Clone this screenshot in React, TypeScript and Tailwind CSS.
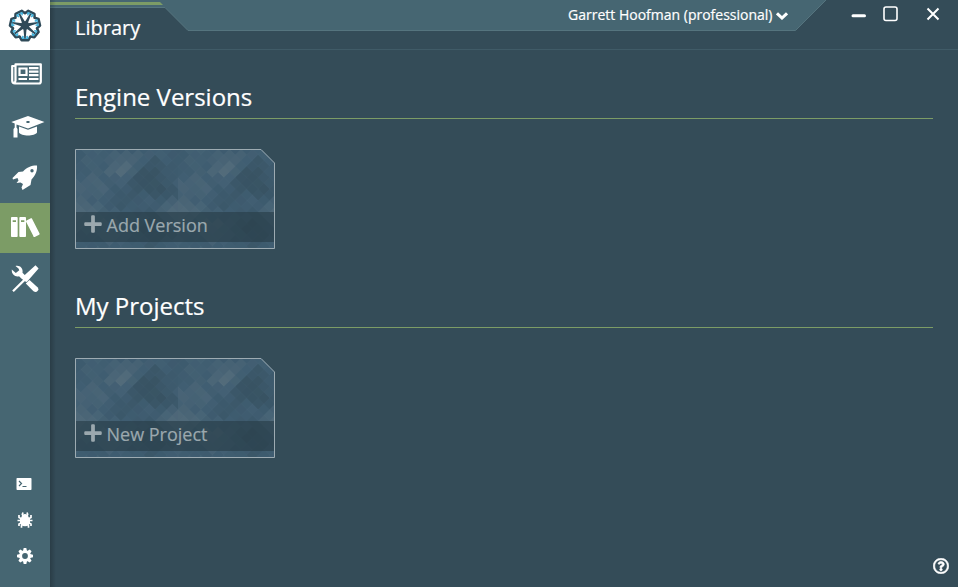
import type { ReactNode } from "react";
import { ImBooks } from "react-icons/im";
import { FaPlus, FaRegQuestionCircle } from "react-icons/fa";

const CELL = 103 / 18;

// Soft light and dark areas of the repeating card texture: x, y, radius, strength.
const AREAS = [
  [42, 19, 8, 0.13], [60, 13, 8, 0.13], [52, 24, 8, 0.11],
  [78, 22, 10, -0.19], [84, 40, 9, -0.18], [66, 31, 10, -0.16], [101, 44, 7, -0.14],
  [103, 62, 13, 0.19], [0, 62, 13, 0.19], [20, 34, 14, 0.08],
  [48, 50, 11, -0.1], [43, 76, 15, 0.08], [76, 81, 14, -0.14],
];

function noise(a: number, b: number) {
  const v = Math.sin(a * 127.1 + b * 311.7) * 43758.5453;
  return v - Math.floor(v);
}

const DIAMONDS: { x: number; y: number; shade: number }[] = [];
for (let row = 0; row <= 18; row++) {
  for (let col = 0; col <= 18; col++) {
    if ((row + col) % 2) continue;
    const x = col * CELL;
    const y = row * CELL;
    let shade = (noise(col % 18, row) - 0.5) * 0.1;
    for (const [ax, ay, r, s] of AREAS) {
      shade += s * Math.exp(-((Math.abs(x - ax) + Math.abs(y - ay)) ** 2) / (2 * r * r));
    }
    DIAMONDS.push({ x, y, shade });
  }
}

function Texture({ id }: { id: string }) {
  return (
    <svg width="200" height="100" className="absolute inset-0">
      <defs>
        <pattern id={id} width="103" height="103" patternUnits="userSpaceOnUse">
          <rect width="103" height="103" fill="#3f5d71" />
          {DIAMONDS.map((d, i) => (
            <path
              key={i}
              d={`M${d.x} ${d.y - CELL}l${CELL} ${CELL}l${-CELL} ${CELL}l${-CELL} ${-CELL}z`}
              fill={d.shade > 0 ? "#77868d" : "#2b4048"}
              opacity={Math.min(Math.abs(d.shade) * 1.9, 0.35)}
            />
          ))}
        </pattern>
      </defs>
      <path d="M0 0H186L200 14V100H0Z" fill={`url(#${id})`} />
      <path d="M0 63H200V93H0Z" fill="#283d48" opacity=".65" />
      <path d="M.5 .5H186L199.500 14V99.500H.5Z" fill="none" stroke="#9dabb2" />
    </svg>
  );
}

function Card({ id, label }: { id: string; label: string }) {
  return (
    <button className="relative mt-[30px] block h-[100px] w-[200px] text-left">
      <Texture id={id} />
      <span className="relative mt-[53px] flex h-[30px] items-center pl-2 text-[18px] text-[#9ba8ae]">
        <FaPlus className="-mt-[3px] mr-[3.500px] size-5" />
        {label}
      </span>
    </button>
  );
}

function Section({ id, title, label }: { id: string; title: string; label: string }) {
  return (
    <section className="h-[209px]">
      <h2 className="h-[47px] border-b border-[#7c9c66] pt-[7px] text-2xl leading-[36px] text-white">{title}</h2>
      <Card id={id} label={label} />
    </section>
  );
}

const LOBES = [0, 1, 2, 3, 4, 5, 6].map((k) => 90 + (k * 360) / 7);

function polar(deg: number, r: number) {
  const a = (deg * Math.PI) / 180;
  return `${(Math.cos(a) * r).toFixed(2)} ${(Math.sin(a) * r).toFixed(2)}`;
}

function gearOutline(outer: number, inner: number) {
  const points = LOBES.flatMap((a) => [polar(a - 13, outer), polar(a + 13, outer), polar(a + 180 / 7, inner)]);
  return `M${points.join("L")}Z`;
}

function Logo() {
  return (
    <svg viewBox="-25 -25.500 50 50" className="size-[50px]" strokeLinejoin="round">
      <path d={gearOutline(15, 12.3)} fill="#fff" stroke="#2f4a58" strokeWidth="2.600" />
      {LOBES.map((a) => (
        <g key={a} transform={`rotate(${a - 90})`}>
          <path d="M-3.300 12.800H3.300M-3.300 12.800L-1.600 10.500M3.300 12.800L1.600 10.500" stroke="#45b4de" strokeWidth="1.500" fill="none" />
          <path d="M-1.600 3L-.7 13H.7L1.600 3Z" fill="#2f4a58" />
        </g>
      ))}
      <circle r="4.300" fill="#2f4a58" />
    </svg>
  );
}

function NavItem({ active, children }: { active?: boolean; children: ReactNode }) {
  return (
    <a className={`flex h-[50px] w-[50px] items-center justify-center ${active ? "bg-[#7c9c66]" : ""}`}>{children}</a>
  );
}

function Newspaper() {
  return (
    <svg viewBox="0 0 31 22" className="mr-[-3px] mb-[2px] h-[22px] w-[31px]" fill="none" stroke="currentColor">
      <path d="M4.500 3H1.200V17.500Q1.200 20.500 4 20.500H28Q29.800 20.500 29.800 18.500V1.300H4.500V17.500Q4.500 19.500 3 19.800" strokeWidth="2.200" strokeLinejoin="round" />
      <path d="M8.500 5.500H15.500V12H8.500ZM18 5.200H27.500M18 8.700H27.500M18 12.200H27.500M7.500 16H16M18 16H27.500" strokeWidth="2.200" />
    </svg>
  );
}

function Cap() {
  return (
    <svg viewBox="0 0 34 22" className="mt-[2px] mr-[-6px] h-[22px] w-[34px] shrink-0" fill="currentColor">
      <path fillRule="evenodd" d="M17 0L33.500 6L17 12.500L5.500 8.500V11.500L6.500 13V21.500H2.500V13L3.700 11.500V7.500L.3 6ZM17 5C14.500 5 14.500 7 17 7S19.500 5 17 5Z" />
      <path d="M8 10.500L17 13.800L26 10.500V16.500C24 20.500 10 20.500 8 16.500Z" />
    </svg>
  );
}

function Rocket() {
  return (
    <svg viewBox="0 0 26 26" className="mt-[2px] mr-[1px] size-[26px]" fill="currentColor">
      <path fillRule="evenodd" d="M25 .5C25.400 5 24 10 19.500 14.500L18.500 20L10.500 25L9.500 22.500L11 19L8.500 17.500L4.500 18L6.500 15.500L5.500 13L1 14.500L.5 13L6.500 7L11 6.500C15 2 20 .3 25 .5ZM20 4A1.700 1.700 0 1 0 20 7.400A1.700 1.700 0 1 0 20 4Z" />
    </svg>
  );
}

function Tools() {
  return (
    <svg viewBox="0 0 28 28" className="size-[28px]" fill="currentColor">
      <path d="M4.500 1C8.500 0 12.500 3 11.500 7.800L15 11.200L11.500 14.500L8 11.200C4.500 12.300 .3 9.500 .8 4.500L4.800 8L8.300 5.300L7.500 3.500Z" />
      <path d="M18.500 15L26.500 22.300C29 25 25.500 28.500 22.500 26.200L14.800 18.500Z" />
      <path d="M27.600 3.500L24.500 .3L11 12.500L12 14.700L1.200 25.500L2.800 27L13.700 16.200L15.800 17Z" />
    </svg>
  );
}

function Terminal() {
  return (
    <svg viewBox="0 0 16 12" className="h-3 w-4">
      <rect x=".5" width="15" height="12" rx=".7" fill="#fff" />
      <path d="M3 3L5.500 5.500L3 8M6.500 8.500H10.500" fill="none" stroke="#466672" strokeWidth="1.200" />
    </svg>
  );
}

function Bug() {
  return (
    <svg viewBox="0 0 16 16" className="size-4" fill="none" stroke="#fff" strokeWidth="1.700" strokeLinejoin="round">
      <path d="M6 4L5.300 2.500L6 .5M10 4L10.700 2.500L10 .5M5 7L2 5.500V3M11 7L14 5.500V3M5 8.500H.5M11 8.500H15.500M5 10.500L2 12V14M11 10.500L14 12V14M5.500 12L4.500 13.500V15.700M10.500 12L11.500 13.500V15.700" />
      <path d="M4.500 5Q5 2 8 2T11.500 5L13 7V11.500Q11 14.200 8 14.200T3 11.500V7Z" fill="#fff" stroke="none" />
    </svg>
  );
}

function Gear() {
  return (
    <svg viewBox="-8 -8 16 16" className="size-4">
      {[0, 45, 90, 135].map((a) => (
        <path key={a} d="M-1.300-8H1.300L2-5V5L1.300 8H-1.300L-2 5V-5Z" transform={`rotate(${a})`} fill="#fff" />
      ))}
      <circle r="5.700" fill="#fff" />
      <circle r="2.900" fill="#466672" />
    </svg>
  );
}

function Sidebar() {
  return (
    <nav className="flex w-[50px] shrink-0 flex-col bg-[#466672] text-white">
      <div className="h-[50px] bg-white"><Logo /></div>
      <div className="flex flex-col gap-px">
        <NavItem><Newspaper /></NavItem>
        <NavItem><Cap /></NavItem>
        <NavItem><Rocket /></NavItem>
        <NavItem active><ImBooks className="mr-[-2px] mb-[2px] size-[30px]" /></NavItem>
        <NavItem><Tools /></NavItem>
      </div>
      <div className="mt-auto mb-[13px] flex flex-col items-center">
        <div className="flex h-9 w-[50px] items-center pl-4"><Terminal /></div>
        <div className="flex h-9 items-center"><Bug /></div>
        <div className="flex h-9 items-center"><Gear /></div>
      </div>
    </nav>
  );
}

function Header() {
  return (
    <header className="relative flex h-[50px] shrink-0 border-b border-[#405b67] text-white">
      <svg width="908" height="49" className="absolute inset-0">
        <path d="M0 0H776L745.500 30.500H138L115 7.500H0Z" fill="#466672" />
        <path d="M776 0L745.500 30.500H138L115 7.500H0" fill="none" stroke="#55747e" />
        <path d="M0 2H110L113 5H0Z" fill="#7c9c66" />
      </svg>
      <h1 className="relative w-[140px] pt-[13px] pl-[25px] text-xl leading-[30px]">Library</h1>
      <div className="relative mr-[170px] ml-auto flex h-[30px] items-center gap-[3.500px] text-sm">
        Garrett Hoofman (professional)
        <svg viewBox="0 0 12 8" className="mt-0.5 h-2 w-3" fill="none" stroke="currentColor" strokeWidth="3">
          <path d="M1 1.300L6 6L11 1.300" />
        </svg>
      </div>
      <svg viewBox="0 0 90 16" className="absolute top-[6px] right-[17px] h-4 w-[90px]" fill="none" stroke="currentColor">
        <path d="M2 9.700H13.500" strokeWidth="3" strokeLinecap="round" />
        <rect x="33" y="1" width="13" height="13.500" rx="2" strokeWidth="1.600" />
        <path d="M76.500 2.500L87.500 13.500M87.500 2.500L76.500 13.500" strokeWidth="2" />
      </svg>
    </header>
  );
}

export default function App() {
  return (
    <div className="flex h-[587px] w-[958px] overflow-hidden bg-[#344c58] font-['Open_Sans','Noto_Sans',sans-serif] [-webkit-text-stroke:0.2px]">
      <Sidebar />
      <div className="relative flex min-w-0 flex-1 flex-col">
        <Header />
        <main className="px-[25px] pt-[22px]">
          <Section id="version-texture" title="Engine Versions" label="Add Version" />
          <Section id="project-texture" title="My Projects" label="New Project" />
        </main>
        <FaRegQuestionCircle className="mt-auto mr-[9px] mb-[13px] ml-auto size-4 text-white" stroke="currentColor" strokeWidth="20" />
        <div className="absolute inset-y-0 left-0 w-[6px] bg-linear-to-r from-black/20 to-transparent" />
      </div>
    </div>
  );
}
